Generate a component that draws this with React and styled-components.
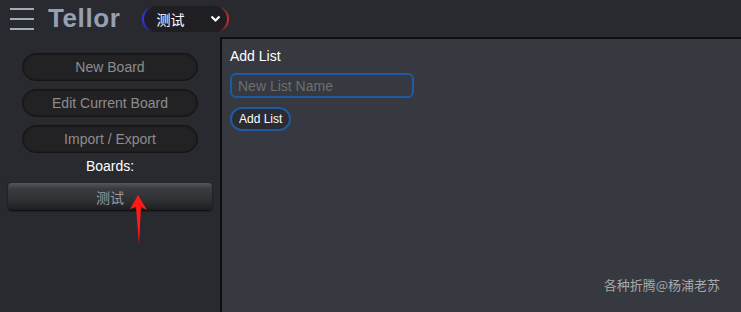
import React from 'react';
import styled, { createGlobalStyle } from 'styled-components';

const GlobalStyle = createGlobalStyle`
  html, body {
    margin: 0;
    padding: 0;
    height: 100%;
    background: #282a30;
    font-family: "Liberation Sans", Arial, "Noto Sans CJK SC", sans-serif;
  }
  #root { height: 100%; }
`;

const Page = styled.div`
  display: flex;
  flex-direction: column;
  height: 312px;
  position: relative;
  overflow: hidden;
`;

const Header = styled.header`
  display: flex;
  align-items: center;
  height: 37px;
  padding-left: 10px;
  background: #282a30;
`;

const Burger = styled.div`
  display: flex;
  flex-direction: column;
  gap: 8px;
  width: 24px;
  margin-right: 14px;

  span {
    display: block;
    height: 2px;
    background: #a3acb9;
  }
`;

const Logo = styled.h1`
  margin: 0 22px 0 0;
  font-size: 26px;
  font-weight: 700;
  color: #95a1b2;
  letter-spacing: 0.6px;
`;

const SelectWrap = styled.div`
  position: relative;
  width: 87px;
  height: 26px;
  border-radius: 13px;
  padding: 0 2px;
  background: linear-gradient(90deg, #3434ff 0%, #1f1f23 12%, #1f1f23 88%, #d03030 100%);
  box-sizing: border-box;
  display: flex;
  align-items: center;
`;

const Select = styled.div`
  flex: 1;
  height: 24px;
  border-radius: 12px;
  background: #1f1f23;
  display: flex;
  align-items: center;
  justify-content: space-between;
  padding: 0 6px 0 12px;
  color: #fff;
  font-size: 14px;
  font-family: "Noto Sans CJK SC", sans-serif;
`;

const Body = styled.div`
  display: flex;
  flex: 1;
`;

const Sidebar = styled.aside`
  width: 220px;
  display: flex;
  flex-direction: column;
  align-items: center;
  padding-top: 16px;
  box-sizing: border-box;
  background: #282a30;
`;

const SideButton = styled.button`
  width: 176px;
  height: 28px;
  margin-bottom: 8px;
  border-radius: 14px;
  border: 1px solid #141414;
  background: #222224;
  color: #8d8d8d;
  font-family: "Liberation Sans", Arial, sans-serif;
  font-size: 14px;
  box-shadow: inset 0 0 2px rgba(0,0,0,0.6);
`;

const BoardsLabel = styled.div`
  color: #fff;
  font-size: 14px;
  margin: -3px 0 9px;
`;

const BoardButton = styled.button`
  position: relative;
  width: 204px;
  height: 27px;
  border-radius: 4px;
  border: none;
  background: linear-gradient(180deg, #55575c 0%, #3a3c40 20%, #2c2e32 70%, #1c1d20 100%);
  box-shadow: 0 1px 2px rgba(0,0,0,0.8);
  color: #9a9a9a;
  font-size: 14px;
  font-family: "Noto Sans CJK SC", sans-serif;
`;

const Arrow = styled.svg`
  position: absolute;
  left: 128px;
  top: 193px;
`;

const Main = styled.main`
  flex: 1;
  background: #363940;
  border-top: 2px solid #0e0e10;
  border-left: 2px solid #0e0e10;
  padding: 9px 8px;
  display: flex;
  flex-direction: column;
  align-items: flex-start;
`;

const Title = styled.div`
  color: #fff;
  font-size: 14px;
  margin-bottom: 9px;
`;

const Input = styled.input`
  width: 184px;
  height: 25px;
  box-sizing: border-box;
  border: 2px solid #1f5aa0;
  border-radius: 6px;
  background: transparent;
  color: #fff;
  font-family: "Liberation Sans", Arial, sans-serif;
  font-size: 14px;
  padding: 0 6px;
  margin-bottom: 9px;
  outline: none;

  &::placeholder { color: #6e6e6e; }
`;

const AddButton = styled.button`
  height: 24px;
  padding: 0 7px;
  border-radius: 12px;
  border: 2px solid #1f5aa0;
  background: #2a2c31;
  color: #fff;
  font-family: "Liberation Sans", Arial, sans-serif;
  font-size: 12px;
`;

const Watermark = styled.div`
  position: absolute;
  right: 21px;
  bottom: 18px;
  color: #a8a8a8;
  font-size: 13px;
  font-family: "Noto Sans CJK SC", sans-serif;
`;

export default function App() {
  return (
    <Page>
      <GlobalStyle />
      <Header>
        <Burger><span /><span /><span /></Burger>
        <Logo>Tellor</Logo>
        <SelectWrap>
          <Select>
            <span>测试</span>
            <svg width="11" height="8" viewBox="0 0 11 8">
              <path d="M1.5 1.5 L5.5 5.5 L9.5 1.5" stroke="#fff" strokeWidth="2.2" fill="none" />
            </svg>
          </Select>
        </SelectWrap>
      </Header>
      <Body>
        <Sidebar>
          <SideButton>New Board</SideButton>
          <SideButton>Edit Current Board</SideButton>
          <SideButton>Import / Export</SideButton>
          <BoardsLabel>Boards:</BoardsLabel>
          <BoardButton>测试</BoardButton>
        </Sidebar>
        <Main>
          <Title>Add List</Title>
          <Input placeholder="New List Name" />
          <AddButton>Add List</AddButton>
        </Main>
      </Body>
      <Arrow width="22" height="54" viewBox="0 0 22 54">
        <path d="M10 2 L2 16 L8 14 L11 52 L13 14 L19 17 Z" fill="#ff1a1a" />
      </Arrow>
      <Watermark>各种折腾@杨浦老苏</Watermark>
    </Page>
  );
}
